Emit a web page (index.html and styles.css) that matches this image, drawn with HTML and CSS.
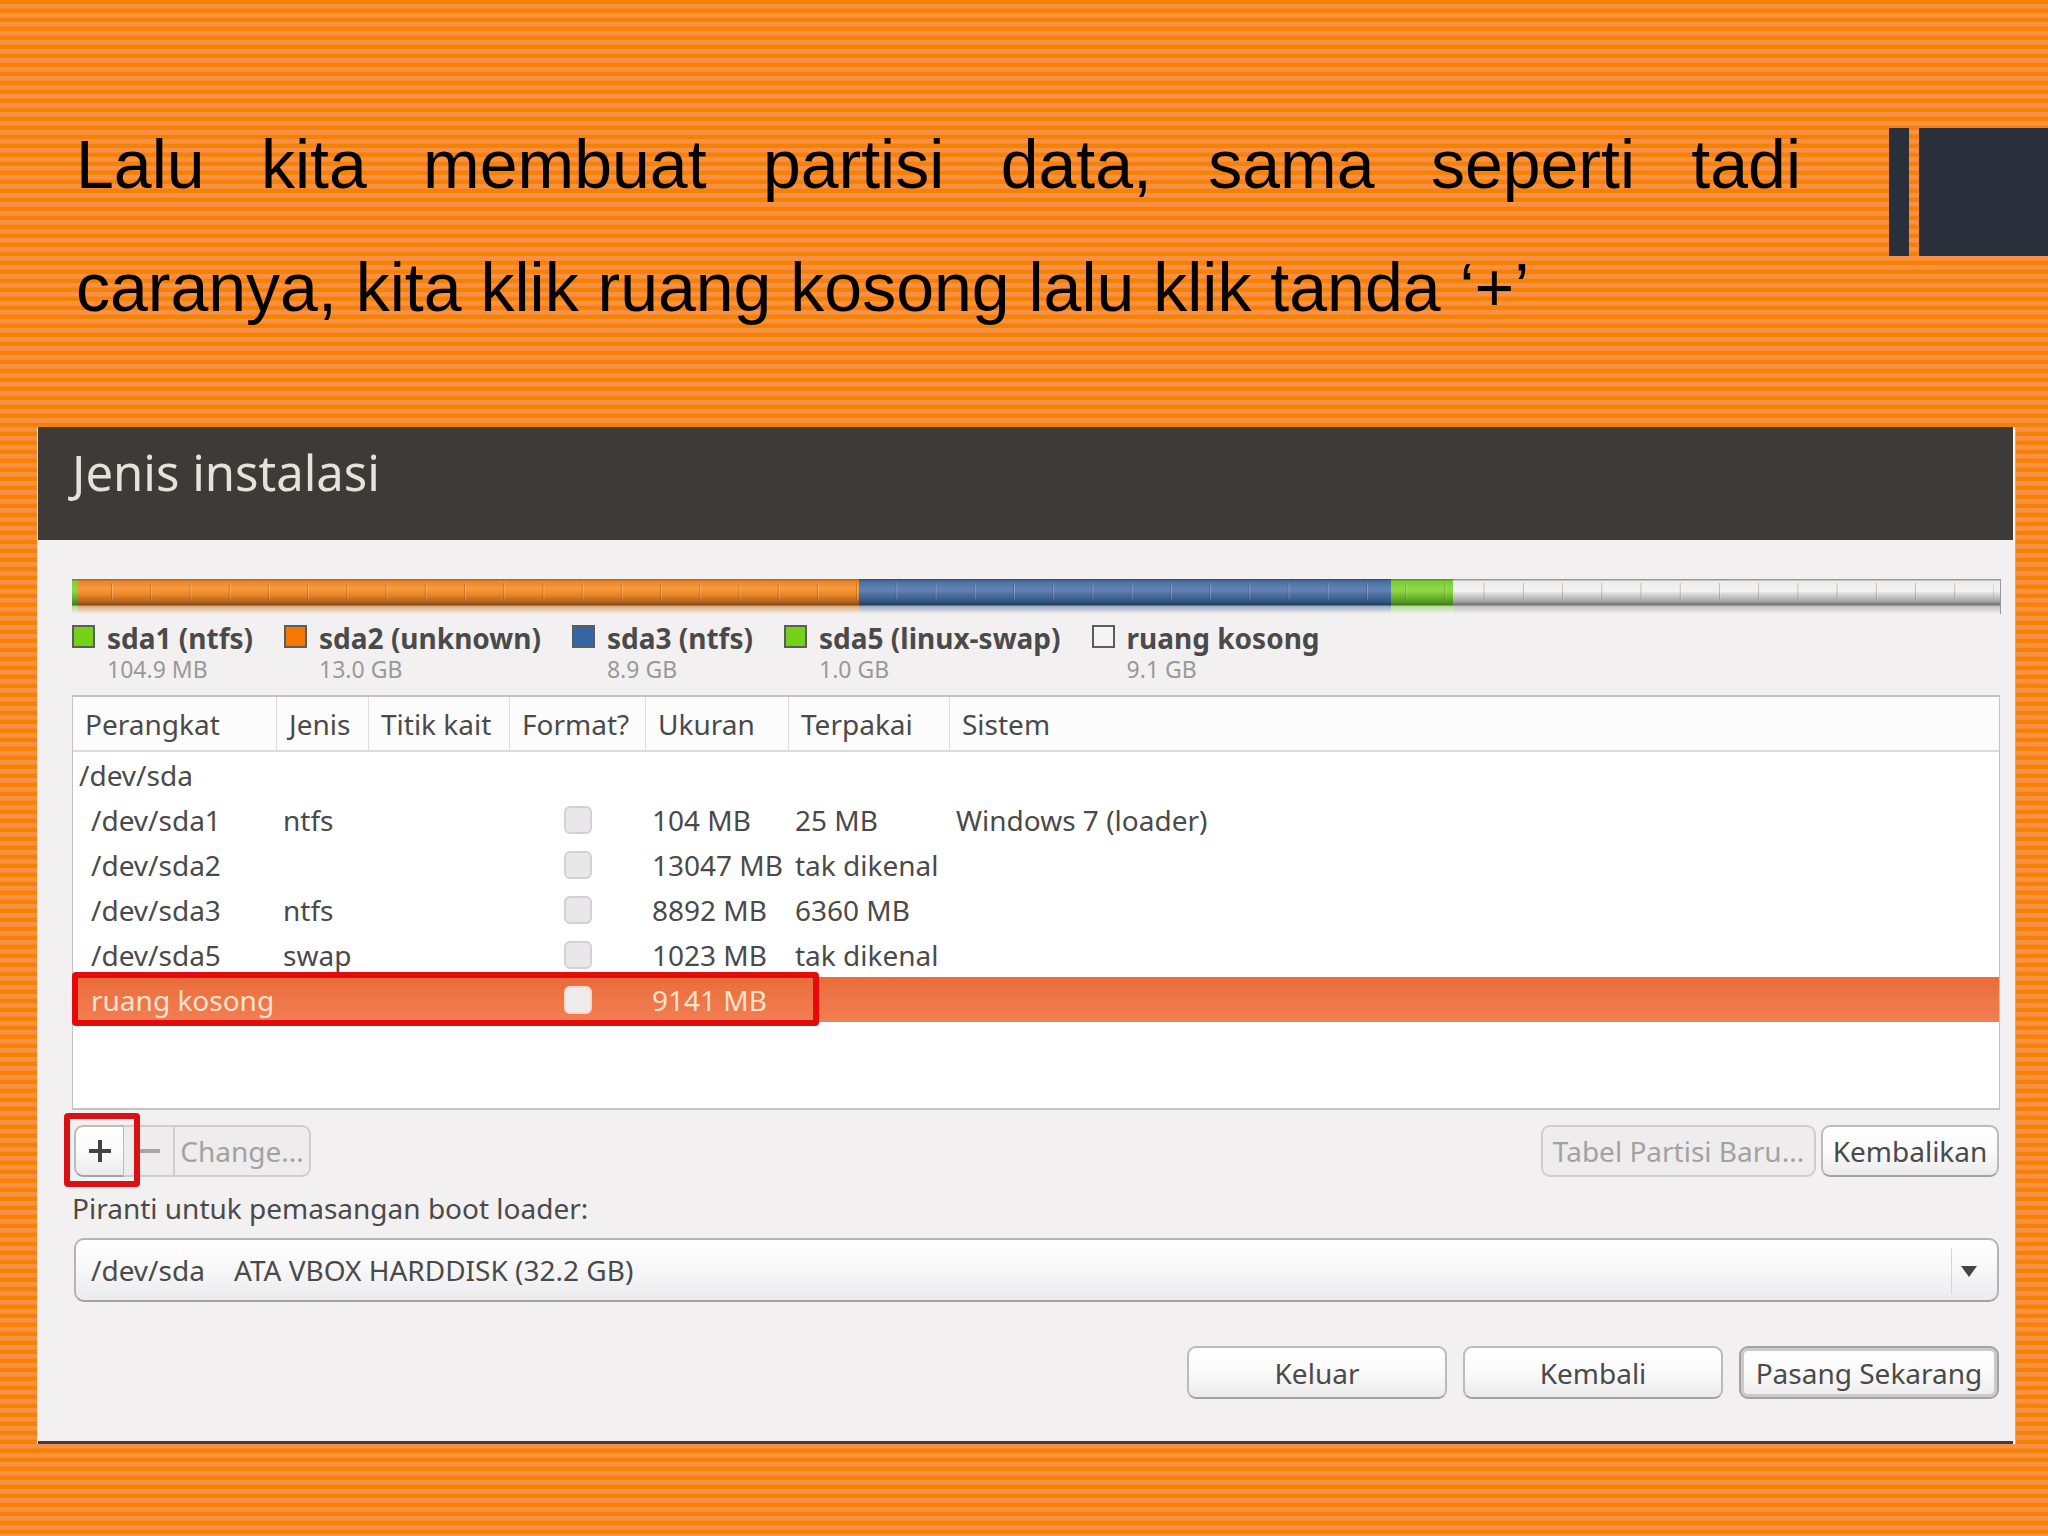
FILE: index.html
```html
<!DOCTYPE html>
<html lang="id">
<head>
<meta charset="utf-8">
<title>Jenis instalasi</title>
<link rel="stylesheet" href="styles.css">
</head>
<body>
<header class="slide-head">
  <p class="slide-text">Lalu kita membuat partisi data, sama seperti tadi caranya, kita klik ruang kosong lalu klik tanda ‘+’</p>
  <div class="accent accent-thin"></div>
  <div class="accent accent-wide"></div>
</header>

<main class="installer">
  <h1 class="installer-title">Jenis instalasi</h1>
  <div class="installer-body">
    <div class="disk">
      <div class="disk-bar">
        <div class="part green" style="width: 0.3%"></div>
        <div class="part orange" style="width: 40.5%"></div>
        <div class="part blue" style="width: 27.6%"></div>
        <div class="part green" style="width: 3.2%"></div>
        <div class="part free"></div>
        <div class="ticks"></div>
      </div>
      <ul class="legend">
        <li><span class="swatch sw-green"></span><div><b>sda1 (ntfs)</b><small>104.9 MB</small></div></li>
        <li><span class="swatch sw-orange"></span><div><b>sda2 (unknown)</b><small>13.0 GB</small></div></li>
        <li><span class="swatch sw-blue"></span><div><b>sda3 (ntfs)</b><small>8.9 GB</small></div></li>
        <li><span class="swatch sw-green"></span><div><b>sda5 (linux-swap)</b><small>1.0 GB</small></div></li>
        <li><span class="swatch"></span><div><b>ruang kosong</b><small>9.1 GB</small></div></li>
      </ul>
    </div>

    <div class="table-box">
      <table class="partitions">
        <colgroup>
          <col class="c-device"><col class="c-type"><col class="c-mount"><col class="c-format"><col class="c-size"><col class="c-used"><col>
        </colgroup>
        <thead>
          <tr><th>Perangkat</th><th>Jenis</th><th>Titik kait</th><th>Format?</th><th>Ukuran</th><th>Terpakai</th><th>Sistem</th></tr>
        </thead>
        <tbody>
          <tr><td>/dev/sda</td><td></td><td></td><td></td><td></td><td></td><td></td></tr>
          <tr><td class="child">/dev/sda1</td><td>ntfs</td><td></td><td class="check"><input type="checkbox" aria-label="Format /dev/sda1" disabled></td><td>104 MB</td><td>25 MB</td><td>Windows 7 (loader)</td></tr>
          <tr><td class="child">/dev/sda2</td><td></td><td></td><td class="check"><input type="checkbox" aria-label="Format /dev/sda2" disabled></td><td>13047 MB</td><td>tak dikenal</td><td></td></tr>
          <tr><td class="child">/dev/sda3</td><td>ntfs</td><td></td><td class="check"><input type="checkbox" aria-label="Format /dev/sda3" disabled></td><td>8892 MB</td><td>6360 MB</td><td></td></tr>
          <tr><td class="child">/dev/sda5</td><td>swap</td><td></td><td class="check"><input type="checkbox" aria-label="Format /dev/sda5" disabled></td><td>1023 MB</td><td>tak dikenal</td><td></td></tr>
          <tr class="selected"><td class="child">ruang kosong<span class="mark mark-row"></span></td><td></td><td></td><td class="check"><input type="checkbox" aria-label="Format ruang kosong" disabled></td><td>9141 MB</td><td></td><td></td></tr>
        </tbody>
      </table>
    </div>

    <div class="toolbar">
      <div class="group">
        <button class="btn icon-btn first" type="button" aria-label="Tambah"><svg width="24" height="24" viewBox="0 0 24 24"><path d="M12 1v22M1 12h22" stroke="#444" stroke-width="4"/></svg></button>
        <button class="btn icon-btn middle" type="button" aria-label="Hapus" disabled><svg width="24" height="24" viewBox="0 0 24 24"><path d="M1 12h22" stroke="#a5a3a3" stroke-width="4"/></svg></button>
        <button class="btn last" type="button" disabled>Change...</button>
        <span class="mark mark-add"></span>
      </div>
      <div class="right-buttons">
        <button class="btn new-table" type="button" disabled>Tabel Partisi Baru...</button>
        <button class="btn revert" type="button">Kembalikan</button>
      </div>
    </div>

    <label class="boot-label" for="boot">Piranti untuk pemasangan boot loader:</label>
    <div class="select-box">
      <select id="boot"><option>/dev/sda&nbsp;&nbsp;&nbsp; ATA VBOX HARDDISK (32.2 GB)</option></select>
      <span class="arrow"><svg width="16" height="12" viewBox="0 0 16 12"><path d="M0 1h16L8 12z" fill="#444"/></svg></span>
    </div>

    <div class="actions">
      <button class="btn" type="button">Keluar</button>
      <button class="btn" type="button">Kembali</button>
      <button class="btn default" type="button">Pasang Sekarang</button>
    </div>
  </div>
</main>
</body>
</html>
```
FILE: styles.css
```css
* { box-sizing: border-box; }

body {
  margin: 0;
  min-height: 100vh;
  background: repeating-linear-gradient(#f58200 0 4px, #f89048 4px 8px, #f78a2c 8px 9px);
  color: #4a4a4a;
  font: 28px/34px "Noto Sans", "Open Sans", sans-serif;
}

.slide-head {
  display: flex;
  align-items: flex-start;
  padding: 103px 0 78px 76px;
}

.slide-text {
  flex: 1;
  margin: 0 88px 0 0;
  color: #000;
  font: 68px/123px "Liberation Sans", Arial, sans-serif;
  text-align: justify;
}

.accent { height: 128px; margin-top: 25px; background: #2a303b; }
.accent-thin { width: 20px; margin-right: 10px; }
.accent-wide { width: 129px; }

.installer {
  margin: 0 32px 0 37px;
  padding: 0 2px 0 1px;
  background: #f2f0f0;
  border-right: 1px solid #b9b4b2;
}

.installer-title {
  margin: 0;
  padding: 15px 34px 38px;
  background: #3d3a37;
  color: #e6e1da;
  font-size: 49px;
  font-weight: 400;
  line-height: 60px;
}

.installer-body {
  padding: 39px 12px 42px 34px;
  border-bottom: 3px solid #403d3a;
}

.disk-bar { position: relative; display: flex; height: 35px; }
.part { height: 35px; }
.part.free { flex: 1; border-right: 1px solid #999; }
.orange { background: linear-gradient(#b9641a 0 1px, #ea8425 2px, #f69a3c 10px, #ee8a2a 15px, #a85d17 24px, #7c4718 26px, #dca978 27px, #f2f0f0 35px); }
.blue { background: linear-gradient(#34517c 0 1px, #4a6da3 2px, #6384b6 11px, #4e72a6 15px, #33547f 23px, #243a5a 26px, #9aabc4 27px, #f2f0f0 35px); }
.green { background: linear-gradient(#539a20 0 1px, #7bcb30 2px, #8fda4c 11px, #7cc935 15px, #4c8f1d 24px, #3f7519 26px, #b5d993 27px, #f2f0f0 35px); }
.free { background: linear-gradient(#999 0 1px, #ececea 2px, #f3f3f0 12px, #d8d8d8 15px, #a8a8a8 22px, #6f6f6f 26px, #c0bebe 27px, #f2f0f0 35px); }

.ticks {
  position: absolute;
  inset: 4px 0 15px 0;
  padding: 0 7px 0 39px;
  background: linear-gradient(90deg, rgba(70, 50, 30, .28) 0 1px, rgba(255, 255, 255, .25) 1px 2px, transparent 2px) content-box;
  background-size: calc(100% / 48) 100%;
}

.legend {
  display: flex;
  gap: 31px;
  margin: 0;
  padding: 8px 0 11px;
  list-style: none;
}
.legend li { display: flex; gap: 12px; }
.legend b, .legend small { display: block; }
.legend b { line-height: 32px; }
.legend small { color: #999; font-size: 23px; line-height: 30px; }
.swatch { width: 23px; height: 23px; margin-top: 3px; border: 2px solid #5c5c5c; background: #f4f4f4; }
.sw-green { background: #73d216; }
.sw-orange { background: #f57900; }
.sw-blue { background: #3465a4; }

.table-box {
  margin-right: 1px;
  padding-bottom: 86px;
  background: #fff;
  border: 1px solid #c4c2c2;
  border-top-width: 2px;
  border-bottom-width: 2px;
}

.partitions { width: 100%; table-layout: fixed; border-spacing: 0; }
.c-device { width: 204px; }
.c-type { width: 92px; }
.c-mount { width: 141px; }
.c-format { width: 136px; }
.c-size { width: 143px; }
.c-used { width: 161px; }
.partitions th {
  height: 55px;
  padding: 0 0 0 12px;
  background: #fdfcfd;
  border-right: 1px solid #dedcdc;
  border-bottom: 2px solid #dcdada;
  font-weight: 400;
  text-align: left;
  white-space: nowrap;
}
.partitions th:last-child { border-right: 0; }
.partitions td { height: 45px; padding: 0 0 0 6px; white-space: nowrap; }
.partitions .child { padding-left: 18px; }
.partitions .check { padding: 0; text-align: center; }
.check input {
  appearance: none;
  display: block;
  width: 28px;
  height: 28px;
  margin: 0 auto;
  background: #e9e7e9;
  border: 2px solid #d3d1d3;
  border-radius: 6px;
}
.selected td { background: linear-gradient(#ea6d3b, #f27e52); color: #fde3cf; }
.selected td:first-child { position: relative; }
.partitions .selected input { background: #eeecea; border-color: #f6d9cb; }

.mark { position: absolute; border: 6px solid #e30b0b; border-radius: 4px; pointer-events: none; }
.mark-row { top: -5px; bottom: -4px; left: -1px; width: 747px; }
.mark-add { top: -12px; bottom: -10px; left: -10px; width: 76px; border-color: #da1015; }

.btn {
  height: 52px;
  padding: 0 8px;
  background: linear-gradient(#fff, #fafafa 50%, #ecebeb);
  border: 2px solid #bcbaba;
  border-bottom-color: #a3a1a1;
  border-radius: 9px;
  color: #4a4a4a;
  font: inherit;
  white-space: nowrap;
}
.btn:disabled { background: #eeecec; border-color: #cfcdcd; color: #a3a1a1; }
.btn svg { display: block; margin: 0 auto; }

.toolbar { display: flex; justify-content: space-between; margin: 15px 2px 0; }
.group { position: relative; display: flex; }
.icon-btn { width: 50px; padding: 0; }
.first { border-right-width: 1px; border-radius: 9px 0 0 9px; }
.middle { border-width: 2px 1px 2px 0; border-radius: 0; }
.last { width: 137px; padding: 0; border-left-width: 1px; border-radius: 0 9px 9px 0; }
.right-buttons { display: flex; gap: 5px; }
.new-table { width: 275px; }
.revert { width: 178px; }

.boot-label { display: block; margin: 14px 0 13px; }

.select-box { position: relative; margin: 0 2px; }
.select-box select {
  appearance: none;
  display: block;
  width: 100%;
  height: 64px;
  padding: 0 64px 0 15px;
  background: linear-gradient(#fff, #f8f7f8 50%, #ebeaec);
  border: 2px solid #b5b3b3;
  border-bottom-color: #a3a1a1;
  border-radius: 10px;
  color: #4a4a4a;
  font: inherit;
}
.arrow {
  position: absolute;
  top: 10px;
  right: 2px;
  bottom: 8px;
  display: flex;
  align-items: center;
  width: 46px;
  padding-left: 9px;
  border-left: 1px solid #d6d4d4;
  pointer-events: none;
}

.actions { display: flex; justify-content: flex-end; gap: 16px; margin: 44px 2px 0; }
.actions .btn { width: 260px; height: 53px; }
.actions .default { border: 2px solid #a3a1a1; box-shadow: inset 0 0 0 3px #cbc9c9; }
```
